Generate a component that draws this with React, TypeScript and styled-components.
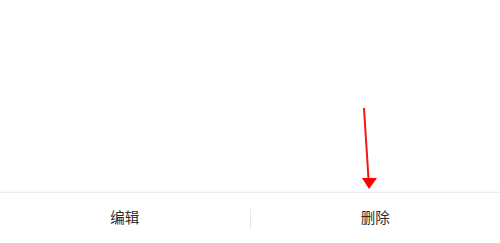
import React, { FC } from "react";
import styled, { createGlobalStyle } from "styled-components";

const GlobalStyle = createGlobalStyle`
  html, body {
    margin: 0;
    padding: 0;
    background: #ffffff;
  }
  body {
    font-family: "Noto Sans CJK SC", "Noto Sans", sans-serif;
  }
`;

const Screen = styled.div`
  position: relative;
  width: 500px;
  height: 243px;
  display: flex;
  flex-direction: column;
  background: #ffffff;
  overflow: hidden;
`;

const Content = styled.div`
  flex: 1;
`;

const ActionBar = styled.div`
  height: 50px;
  display: flex;
  align-items: center;
  border-top: 1px solid #ececec;
  box-shadow: 0 -1px 2px rgba(0, 0, 0, 0.03);
`;

const ActionButton = styled.button`
  flex: 1;
  height: 100%;
  display: flex;
  align-items: center;
  justify-content: center;
  padding: 0 0 3px;
  border: none;
  background: transparent;
  font-family: "Noto Sans CJK SC", sans-serif;
  font-size: 14.5px;
  color: #2a2a2a;
  cursor: pointer;
`;

const Divider = styled.div`
  width: 1px;
  height: 20px;
  margin-top: 1px;
  background: #e6e6e6;
`;

const ArrowMark = styled.svg`
  position: absolute;
  left: 355px;
  top: 105px;
`;

const Arrow: FC = () => (
  <ArrowMark width="30" height="90" viewBox="0 0 30 90">
    <line x1="9" y1="3" x2="13.5" y2="74" stroke="#f21818" strokeWidth="2" />
    <polygon points="7,73 22,73 14,84" fill="#ff0000" />
  </ArrowMark>
);

const App: FC = () => {
  return (
    <Screen>
      <GlobalStyle />
      <Content />
      <ActionBar>
        <ActionButton>编辑</ActionButton>
        <Divider />
        <ActionButton>删除</ActionButton>
      </ActionBar>
      <Arrow />
    </Screen>
  );
};

export default App;
